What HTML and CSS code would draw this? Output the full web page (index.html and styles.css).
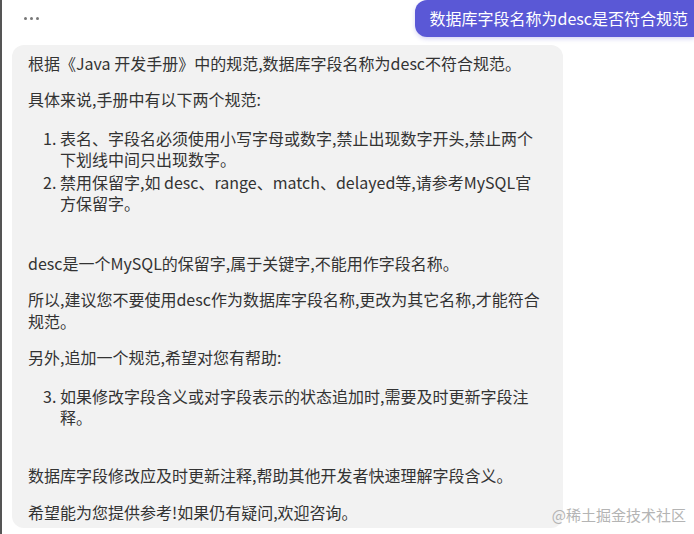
FILE: index.html
```html
<!DOCTYPE html>
<html lang="zh-CN">
<head>
    <meta charset="UTF-8">
    <meta name="viewport" content="width=device-width, initial-scale=1.0">
    <title>数据库字段命名</title>
    <link rel="stylesheet" href="styles.css">
</head>
<body>
    <div class="chat">
        <div class="top-row">
            <div class="more"><span></span><span></span><span></span></div>
            <div class="user-msg">数据库字段名称为desc是否符合规范</div>
        </div>

        <div class="bot-msg">
            <p>根据《Java 开发手册》中的规范,数据库字段名称为desc不符合规范。</p>
            <p>具体来说,手册中有以下两个规范:</p>
            <ol class="gap-lg">
                <li>表名、字段名必须使用小写字母或数字,禁止出现数字开头,禁止两个下划线中间只出现数字。</li>
                <li>禁用保留字,如 desc、range、match、delayed等,请参考MySQL官方保留字。</li>
            </ol>
            <p>desc是一个MySQL的保留字,属于关键字,不能用作字段名称。</p>
            <p>所以,建议您不要使用desc作为数据库字段名称,更改为其它名称,才能符合规范。</p>
            <p>另外,追加一个规范,希望对您有帮助:</p>
            <ol start="3" class="gap-sm">
                <li>如果修改字段含义或对字段表示的状态追加时,需要及时更新字段注释。</li>
            </ol>
            <p class="spaced">数据库字段修改应及时更新注释,帮助其他开发者快速理解字段含义。</p>
            <p>希望能为您提供参考!如果仍有疑问,欢迎咨询。</p>
        </div>

        <div class="watermark">@稀土掘金技术社区</div>
    </div>
</body>
</html>
```

FILE: styles.css
```css
html, body {
    margin: 0;
    padding: 0;
    height: 100%;
    overflow: hidden;
}

body {
    background-color: #fff;
    font-family: "Noto Sans CJK SC", "Noto Sans", sans-serif;
    color: #333;
}

.chat {
    position: relative;
    height: 100%;
    box-sizing: border-box;
    border-left: 2px solid #555;
}

.top-row {
    display: flex;
    justify-content: space-between;
    align-items: flex-start;
    height: 45px;
}

.more {
    display: flex;
    gap: 3px;
    padding: 17px 0 0 22px;
}

.more span {
    width: 3px;
    height: 3px;
    border-radius: 50%;
    background-color: #777;
}

.user-msg {
    height: 37px;
    box-sizing: border-box;
    padding: 0 6px 0 15px;
    line-height: 37px;
    font-size: 16px;
    color: #fff;
    background-color: #5a58d6;
    border-radius: 12px 0 0 12px;
    box-shadow: 0 2px 4px rgba(90, 88, 214, 0.25);
}

.bot-msg {
    width: 551px;
    margin-left: 10px;
    box-sizing: border-box;
    padding: 7px 20px 5px 16px;
    background-color: #f2f2f2;
    border-radius: 12px;
    font-size: 16px;
    line-height: 22px;
}

.bot-msg p {
    margin: 14px 0;
}

.bot-msg p:first-child {
    margin-top: 0;
}

.bot-msg p:last-child {
    margin-bottom: 0;
}

.bot-msg ol {
    margin: 18px 0;
    padding-left: 32px;
}

.bot-msg li {
    line-height: 21px;
    margin-bottom: 2px;
}

.bot-msg ol.gap-lg {
    margin-bottom: 38px;
}

.bot-msg ol.gap-sm {
    margin-bottom: 36px;
}

.bot-msg p.spaced {
    margin-bottom: 15px;
}

.watermark {
    position: absolute;
    right: 8px;
    bottom: 9px;
    font-size: 15px;
    color: #b4b4b4;
}
```
